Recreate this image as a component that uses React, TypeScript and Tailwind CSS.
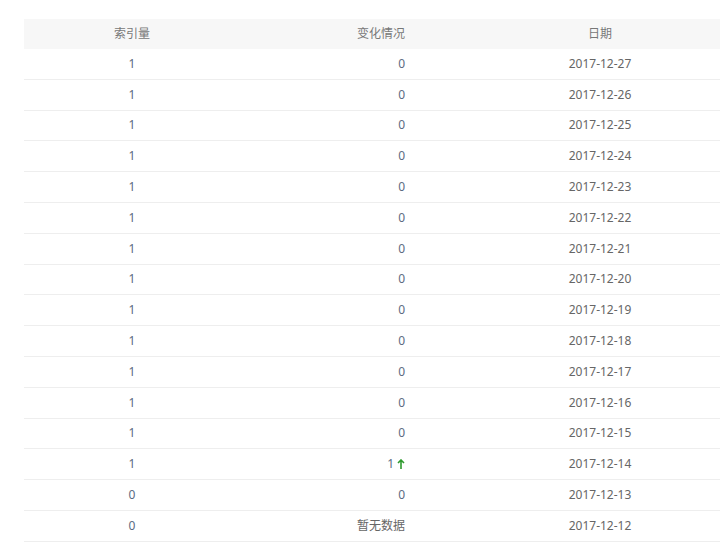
const rows: [string, string, string][] = [
  ["1","0","2017-12-27"],["1","0","2017-12-26"],["1","0","2017-12-25"],["1","0","2017-12-24"],
  ["1","0","2017-12-23"],["1","0","2017-12-22"],["1","0","2017-12-21"],["1","0","2017-12-20"],
  ["1","0","2017-12-19"],["1","0","2017-12-18"],["1","0","2017-12-17"],["1","0","2017-12-16"],
  ["1","0","2017-12-15"],["1","up","2017-12-14"],["0","0","2017-12-13"],["0","none","2017-12-12"],
];

export default function App() {
  return (
    <div className="w-[720px] h-[548px] overflow-hidden bg-white pt-[19px] pl-[24px]" style={{ fontFamily: '"Noto Sans","Noto Sans CJK SC",sans-serif' }}>
      <div className="w-[761px] text-[12px]">
        <div className="flex h-[30px] items-center bg-[#f7f7f7] text-[#777]">
          <div className="w-[216px] text-center">索引量</div>
          <div className="w-[175px] text-right pr-[10px]">变化情况</div>
          <div className="w-[370px] text-center">日期</div>
        </div>
        {rows.map((r, i) => (
          <div key={i} className="flex h-[30.8px] items-center border-b border-[#eeeeee]">
            <div className="w-[216px] text-center text-[#5b6b82]">{r[0]}</div>
            <div className="w-[175px] text-right pr-[10px] text-[#5b6b82]">
              {r[1] === "up" ? (
                <span className="inline-flex items-center gap-[3px]">1
                  <svg width="8" height="10" viewBox="0 0 8 10"><path d="M4 1 L4 10 M1 4 L4 1 L7 4" stroke="#2e9a2e" strokeWidth="1.6" fill="none"/></svg>
                </span>
              ) : r[1] === "none" ? <span className="text-[#666]">暂无数据</span> : r[1]}
            </div>
            <div className="w-[370px] text-center text-[#666]">{r[2]}</div>
          </div>
        ))}
      </div>
    </div>
  );
}
